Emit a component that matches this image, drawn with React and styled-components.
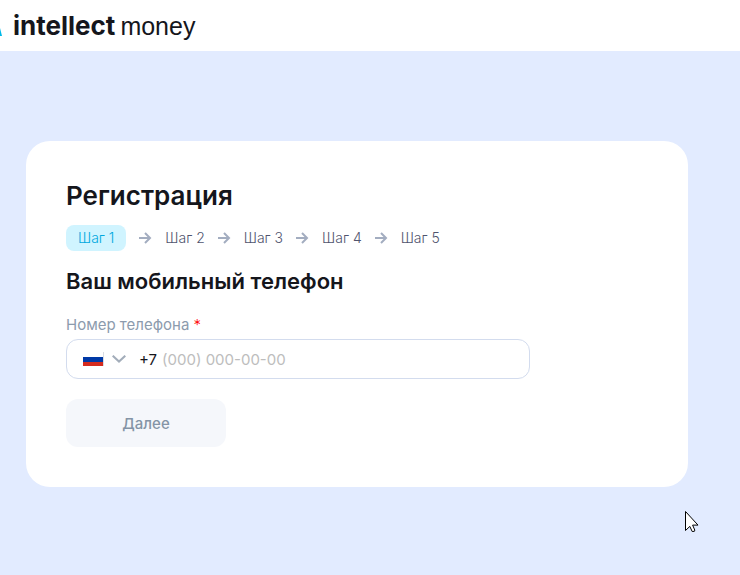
import { Fragment, useState } from "react";
import styled, { createGlobalStyle } from "styled-components";

const GlobalStyle = createGlobalStyle`
    * {
        box-sizing: border-box;
    }
    body {
        margin: 0;
        background-color: #e2ebff;
        font-family: Inter, "Noto Sans", sans-serif;
        color: #15161c;
    }
`;

// ------styled components start ------//
const Header = styled.header`
    display: flex;
    height: 51px;
    background-color: #fff;
    overflow: hidden;
`;
const LogoLink = styled.a`
    display: flex;
    align-items: center;
    color: inherit;
    text-decoration: none;
`;
const LogoMark = styled.svg`
    width: 32px;
    height: 32px;
    margin-left: -30px;
    margin-right: 11px;
`;
const LogoText = styled.span`
    display: flex;
    align-items: baseline;
    gap: 5px;
    font-family: Inter, sans-serif;
    font-size: 26px;
    line-height: 32px;
`;
const LogoBold = styled.strong`
    font-weight: 700;
`;
const LogoLight = styled.span`
    font-family: "Liberation Sans", sans-serif;
    font-size: 25px;
`;
const Page = styled.main`
    padding: 90px 52px 88px 26px;
`;
const Card = styled.section`
    padding: 40px;
    border-radius: 24px;
    background-color: #fff;
`;
const Title = styled.h1`
    margin: 0;
    font-size: 26px;
    font-weight: 600;
    line-height: 30px;
`;
const Steps = styled.ol`
    display: flex;
    align-items: center;
    gap: 13px;
    margin: 14px 0 16px;
    padding: 0;
    list-style: none;
`;
const Step = styled.li`
    padding: ${({ $active }) => ($active ? "0 12px" : "0")};
    border-radius: 8px;
    background-color: ${({ $active }) => ($active ? "#d0f4ff" : "transparent")};
    color: ${({ $active }) => ($active ? "#00a8de" : "#50546e")};
    font-size: 14px;
    font-weight: 300;
    line-height: 26px;
    white-space: nowrap;
`;
const ArrowItem = styled.li`
    display: flex;
`;
const Subtitle = styled.h2`
    margin: 0 0 20px;
    font-size: 22px;
    font-weight: 600;
    line-height: 28px;
`;
const Form = styled.form`
    display: flex;
    flex-direction: column;
    align-items: flex-start;
`;
const Label = styled.label`
    margin-bottom: 4px;
    color: #8c9bad;
    font-size: 15px;
    line-height: 20px;
`;
const Required = styled.span`
    color: #f00;
    font-weight: 300;
`;
const PhoneField = styled.div`
    display: flex;
    align-items: center;
    width: 100%;
    max-width: 464px;
    height: 40px;
    margin-bottom: 20px;
    padding: 0 16px;
    border: 1px solid #d3dcee;
    border-radius: 12px;
    font-size: 15px;
`;
const CountryButton = styled.button`
    display: flex;
    align-items: center;
    gap: 8px;
    margin-right: 13px;
    padding: 0;
    border: none;
    background: none;
    cursor: pointer;
`;
const Prefix = styled.span`
    margin-right: 5px;
`;
const PhoneInput = styled.input`
    flex: 1;
    min-width: 0;
    padding: 0;
    border: none;
    outline: none;
    background: none;
    color: inherit;
    font-family: inherit;
    font-size: 15px;
    &::placeholder {
        color: #bdbdbd;
        opacity: 1;
    }
`;
const NextButton = styled.button`
    width: 160px;
    height: 48px;
    border: none;
    border-radius: 12px;
    background-color: #f5f7fb;
    color: #8494a6;
    font-family: inherit;
    font-size: 15px;
    font-weight: 500;
`;
const Pointer = styled.svg`
    position: fixed;
    left: 685px;
    top: 511px;
    pointer-events: none;
`;
// ------styled components end ------//

const Arrow = () => (
  <svg width="13" height="12" viewBox="0 0 13 12" fill="none" stroke="#a3adc0" strokeWidth="2" aria-hidden="true">
    <path d="M0 6h11M6 1l5 5-5 5" />
  </svg>
);

const Flag = () => (
  <svg width="21" height="14" viewBox="0 0 21 14" aria-hidden="true">
    <path fill="#fff" d="M0 0h20v5H0z" />
    <path fill="#0039a6" d="M0 5h20v5H0z" />
    <path fill="#d52b1e" d="M0 10h20v4H0z" />
    <path fill="#d9dce2" d="M20 0h1v14h-1z" />
  </svg>
);

const steps = ["Шаг 1", "Шаг 2", "Шаг 3", "Шаг 4", "Шаг 5"];

const App = () => {
  const [phone, setPhone] = useState("");

  return (
    <>
        <GlobalStyle />
        <Header>
            <LogoLink href="#">
                <LogoMark viewBox="0 0 32 32" aria-hidden="true">
                    <path fill="#00b9e8" d="M0 26 16 2h10l6 24h-8L20 12 10 26z" />
                </LogoMark>
                <LogoText>
                    <LogoBold>intellect</LogoBold>
                    <LogoLight>money</LogoLight>
                </LogoText>
            </LogoLink>
        </Header>
        <Page>
            <Card>
                <Title>Регистрация</Title>
                <Steps>
                    {steps.map((step, i) => (
                        <Fragment key={step}>
                            {i > 0 && <ArrowItem aria-hidden="true"><Arrow /></ArrowItem>}
                            <Step $active={i === 0} aria-current={i === 0 ? "step" : undefined}>{step}</Step>
                        </Fragment>
                    ))}
                </Steps>
                <Subtitle>Ваш мобильный телефон</Subtitle>
                <Form onSubmit={(e) => e.preventDefault()}>
                    <Label htmlFor="phone">Номер телефона <Required>*</Required></Label>
                    <PhoneField>
                        <CountryButton type="button" aria-label="Код страны" aria-haspopup="listbox">
                            <Flag />
                            <svg width="14" height="8" viewBox="0 0 14 8" fill="none" stroke="#a3adba" strokeWidth="2" aria-hidden="true">
                                <path d="M0.7 0.7 7 6.6l6.3-5.9" />
                            </svg>
                        </CountryButton>
                        <Prefix>+7</Prefix>
                        <PhoneInput
                            id="phone"
                            type="tel"
                            placeholder="(000) 000-00-00"
                            value={phone}
                            onChange={(e) => setPhone(e.target.value)}
                            required
                        />
                    </PhoneField>
                    <NextButton type="submit" disabled={!phone}>Далее</NextButton>
                </Form>
            </Card>
        </Page>
        <Pointer width="14" height="22" viewBox="0 0 14 22" aria-hidden="true">
            <path fill="#fff" stroke="#000" d="M.5.5v19l4.3-4.1 2.4 5.1 2.2-.2.4-1.2-2.2-5h5.4z" />
        </Pointer>
    </>
  )
}

export default App
